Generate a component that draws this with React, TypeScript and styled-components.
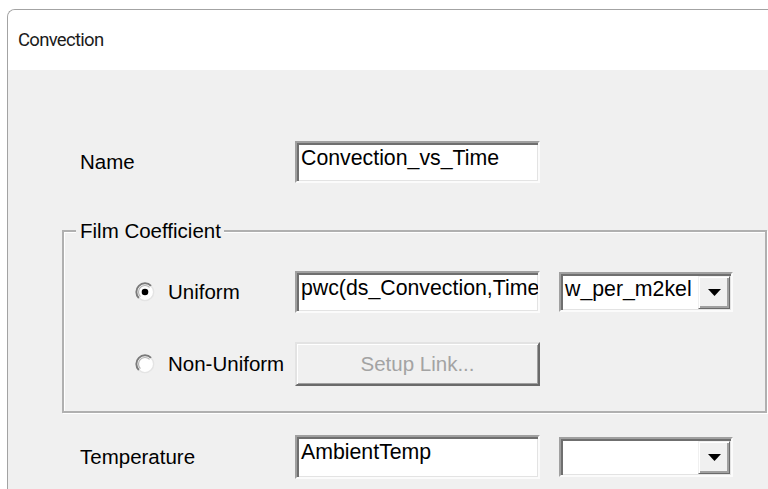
import React from 'react'
import styled, { createGlobalStyle } from 'styled-components'

const GlobalStyle = createGlobalStyle`
  html, body {
    margin: 0;
    padding: 0;
    background: #fff;
    overflow: hidden;
  }
  body {
    width: 768px;
    height: 489px;
  }
`

const Window = styled.div`
  box-sizing: border-box;
  margin: 9px 0 0 7px;
  width: 761px;
  height: 480px;
  border: 1px solid #a3a3a3;
  border-right: none;
  border-bottom: none;
  border-radius: 8px 0 0 0;
  overflow: hidden;
  background: #f0f0f0;
  font-family: 'Liberation Sans', Arial, sans-serif;
  font-size: 20.5px;
  color: #000;
`

const TitleBar = styled.div`
  height: 60px;
  display: flex;
  align-items: center;
  padding-left: 10px;
  background: #fff;
  font-family: Roboto, 'Noto Sans', sans-serif;
  font-size: 18.5px;
  letter-spacing: -0.7px;
  color: #1b1b1b;
`

const Body = styled.div`
  padding: 71px 0 0 54px;
`

const Row = styled.div<{ $indent?: number; $top?: number }>`
  display: flex;
  align-items: center;
  padding-left: ${(p) => p.$indent ?? 0}px;
  margin-top: ${(p) => p.$top ?? 0}px;
`

const Label = styled.div`
  width: 215px;
  line-height: 24px;
`

const Field = styled.div<{ $width: number; $height?: number }>`
  box-sizing: border-box;
  width: ${(p) => p.$width}px;
  height: ${(p) => p.$height ?? 42}px;
  padding: 3px 0 0 4px;
  background: #fff;
  border: 2px solid;
  border-color: #a0a0a0 #fbfbfb #fbfbfb #a0a0a0;
  box-shadow: inset 2px 2px 0 #6f6f6f, inset -1px -1px 0 #e3e3e3;
  font-size: 21.3px;
  line-height: 24px;
  white-space: nowrap;
  overflow: hidden;
`

const Combo = styled.div`
  box-sizing: border-box;
  width: 174px;
  height: 40px;
  margin-left: 19px;
  display: flex;
  background: #fff;
  border: 2px solid;
  border-color: #a0a0a0 #fbfbfb #fbfbfb #a0a0a0;
  box-shadow: inset 2px 2px 0 #6f6f6f, inset -1px -1px 0 #e3e3e3;
`

const ComboText = styled.div`
  flex: 1;
  padding: 3px 0 0 4px;
  font-size: 21.3px;
  line-height: 24px;
  white-space: nowrap;
  overflow: hidden;
`

const DropButton = styled.div`
  box-sizing: border-box;
  width: 32px;
  margin: 2px 1px 1px 0;
  display: flex;
  align-items: center;
  justify-content: center;
  background: #f0f0f0;
  border: 1px solid;
  border-color: #f0f0f0 #6a6a6a #6a6a6a #f0f0f0;
  box-shadow: inset 1px 1px 0 #fff, inset -2px -2px 0 #a0a0a0;
`

const GroupBox = styled.div`
  position: relative;
  box-sizing: border-box;
  width: 705px;
  margin-top: 47px;
  padding: 39px 0 25px 71px;
  border: 2px solid #b0b0b0;
  box-shadow: inset 1px 1px 0 #fff, 1px 1px 0 #fff;
`

const Caption = styled.div`
  position: absolute;
  top: -13px;
  left: 12px;
  padding: 0 3px 0 4px;
  background: #f0f0f0;
  line-height: 24px;
`

const Option = styled.label`
  width: 160px;
  display: flex;
  align-items: center;
  gap: 13px;
  line-height: 24px;
`

const PushButton = styled.button`
  box-sizing: border-box;
  width: 245px;
  height: 44px;
  padding: 0;
  background: #f0f0f0;
  border: 2px solid;
  border-color: #e3e3e3 #6a6a6a #6a6a6a #e3e3e3;
  box-shadow: inset 1px 1px 0 #fff, inset -1px -1px 0 #a0a0a0;
  font: inherit;
  color: #a3a3a3;
`

const Radio = ({ checked }: { checked?: boolean }) => (
  <svg width="20" height="20" viewBox="0 0 20 20">
    <circle cx="10" cy="10" r="8.6" fill="#fff" />
    <path d="M3.9 16.1 A8.6 8.6 0 0 1 16.1 3.9" stroke="#7a7a7a" strokeWidth="2" fill="none" />
    <path d="M5.4 14.6 A6.5 6.5 0 0 1 14.6 5.4" stroke="#b4b4b4" strokeWidth="1.2" fill="none" />
    <path d="M16.1 3.9 A8.6 8.6 0 0 1 3.9 16.1" stroke="#e4e4e4" strokeWidth="1.4" fill="none" />
    {checked && <circle cx="10" cy="10" r="3.3" fill="#000" />}
  </svg>
)

const Arrow = () => (
  <svg width="13" height="7" viewBox="0 0 13 7">
    <path d="M0 0 H13 L6.5 7 Z" fill="#000" />
  </svg>
)

const App: React.FC = () => {
  return (
    <>
      <GlobalStyle />
      <Window>
        <TitleBar>Convection</TitleBar>
        <Body>
          <Row $indent={18}>
            <Label>Name</Label>
            <Field $width={245}>Convection_vs_Time</Field>
          </Row>

          <GroupBox>
            <Caption>Film Coefficient</Caption>
            <Row>
              <Option>
                <Radio checked />
                Uniform
              </Option>
              <Field $width={245}>pwc(ds_Convection,Time)</Field>
              <Combo>
                <ComboText>w_per_m2kel</ComboText>
                <DropButton>
                  <Arrow />
                </DropButton>
              </Combo>
            </Row>
            <Row $top={29}>
              <Option>
                <Radio />
                Non-Uniform
              </Option>
              <PushButton disabled>Setup Link...</PushButton>
            </Row>
          </GroupBox>

          <Row $indent={18} $top={22}>
            <Label>Temperature</Label>
            <Field $width={245} $height={44}>AmbientTemp</Field>
            <Combo>
              <ComboText />
              <DropButton>
                <Arrow />
              </DropButton>
            </Combo>
          </Row>
        </Body>
      </Window>
    </>
  )
}

export default App
